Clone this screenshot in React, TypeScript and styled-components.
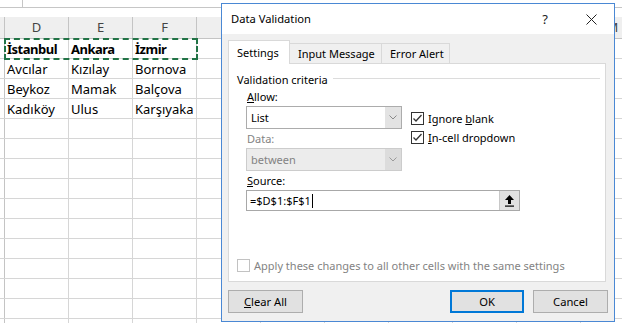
import React from 'react';
import styled, { createGlobalStyle } from 'styled-components';

const GlobalStyle = createGlobalStyle`
  html, body {
    margin: 0;
    padding: 0;
    background: #fff;
  }
  body {
    font-family: "Noto Sans", "Open Sans", sans-serif;
  }
  * {
    box-sizing: border-box;
  }
`;

const Screen = styled.div`
  position: relative;
  width: 622px;
  height: 323px;
  overflow: hidden;
  background: #fff;
`;

/* ---------- spreadsheet behind the dialog ---------- */

const FormulaStrip = styled.div`
  display: flex;
  height: 8px;
  border-bottom: 1px solid #c6c6c6;
`;

const NameBoxEdge = styled.div`
  width: 23px;
  border-right: 1px solid #c6c6c6;
`;

const Band = styled.div`
  height: 9px;
  background: #fff;
`;

const SheetRow = styled.div<{ $header?: boolean }>`
  display: flex;
  height: ${({ $header }) => ($header ? 22 : 20)}px;
  border-bottom: 1px solid ${({ $header }) => ($header ? '#c4c4c4' : '#d6d6d6')};
  background: ${({ $header }) => ($header ? '#efefef' : '#fff')};
`;

const RowStub = styled.div`
  flex: 0 0 5px;
  border-right: 1px solid #c4c4c4;
`;

const Cell = styled.div<{ $header?: boolean; $bold?: boolean }>`
  flex: 0 0 64px;
  border-right: 1px solid ${({ $header }) => ($header ? '#c4c4c4' : '#d6d6d6')};
  padding: ${({ $header }) => ($header ? '0' : '1px 0 0 2px')};
  font-size: 13px;
  line-height: ${({ $header }) => ($header ? '21px' : '19px')};
  text-align: ${({ $header }) => ($header ? 'center' : 'left')};
  color: ${({ $header }) => ($header ? '#444' : '#000')};
  font-weight: ${({ $bold }) => ($bold ? 700 : 400)};
  letter-spacing: ${({ $bold }) => ($bold ? '-0.5px' : '0')};
  white-space: nowrap;
  overflow: hidden;
`;

const CopyMarquee = styled.div`
  position: absolute;
  left: 4px;
  top: 38px;
  width: 194px;
  height: 22px;
  border: 2px dashed #217346;
  pointer-events: none;
`;

/* ---------- dialog ---------- */

const Dialog = styled.div`
  position: absolute;
  left: 221px;
  top: 3px;
  width: 394px;
  height: 319px;
  border: 1px solid #4a88d4;
  background: #f0f0f0;
  display: flex;
  flex-direction: column;
  font-size: 11px;
  color: #000;
`;

const TitleBar = styled.div`
  height: 30px;
  background: #fff;
  display: flex;
  align-items: center;
  padding-left: 9px;
  font-size: 11.2px;
`;

const Title = styled.div`
  flex: 1;
  margin-top: -1px;
`;

const HelpGlyph = styled.div`
  width: 10px;
  font-size: 13px;
  text-align: center;
  margin-right: 36px;
  color: #222;
`;

const CloseGlyph = styled.svg`
  width: 11px;
  height: 11px;
  margin-right: 17px;
`;

const Body = styled.div`
  flex: 1;
  display: flex;
  flex-direction: column;
  padding: 6px 6px 8px 6px;
`;

const TabStrip = styled.div`
  display: flex;
  align-items: flex-end;
  height: 23px;
  position: relative;
  z-index: 1;
`;

const Tab = styled.div<{ $active?: boolean; $w: number }>`
  width: ${({ $w }) => $w}px;
  height: ${({ $active }) => ($active ? 24 : 20)}px;
  margin-bottom: ${({ $active }) => ($active ? -1 : 0)}px;
  padding-left: 8px;
  background: ${({ $active }) => ($active ? '#fff' : '#f0f0f0')};
  border: 1px solid #d9d9d9;
  border-bottom: none;
  border-left: ${({ $active }) => ($active ? '1px solid #d9d9d9' : 'none')};
  line-height: ${({ $active }) => ($active ? 24 : 19)}px;
  white-space: nowrap;
`;

const Panel = styled.div`
  width: 378px;
  height: 219px;
  background: #fff;
  border: 1px solid #d9d9d9;
  display: flex;
  flex-direction: column;
`;

const GroupHeader = styled.div`
  display: flex;
  align-items: center;
  height: 16px;
  margin-top: 7px;
  padding: 0 5px 0 8px;
`;

const GroupRule = styled.div`
  flex: 1;
  height: 1px;
  background: #dcdcdc;
  margin: 0 0 2px 5px;
`;

const GroupBody = styled.div`
  padding-left: 17px;
  margin-top: 2px;
  display: flex;
  flex-direction: column;
`;

const CriteriaRow = styled.div`
  display: flex;
`;

const FieldColumn = styled.div`
  width: 156px;
  display: flex;
  flex-direction: column;
`;

const FieldLabel = styled.div<{ $disabled?: boolean; $gap?: number }>`
  height: 16px;
  line-height: 16px;
  padding-left: 1px;
  margin-top: ${({ $gap }) => $gap ?? 0}px;
  margin-bottom: 1px;
  color: ${({ $disabled }) => ($disabled ? '#838383' : '#000')};
`;

const Combo = styled.div<{ $disabled?: boolean }>`
  height: 23px;
  display: flex;
  border: 1px solid ${({ $disabled }) => ($disabled ? '#cccccc' : '#acacac')};
  background: ${({ $disabled }) => ($disabled ? '#ececec' : '#fff')};
  color: ${({ $disabled }) => ($disabled ? '#838383' : '#000')};
`;

const ComboValue = styled.div`
  flex: 1;
  padding-left: 4px;
  line-height: 21px;
`;

const ComboButton = styled.div<{ $disabled?: boolean }>`
  width: 16px;
  display: flex;
  align-items: center;
  justify-content: center;
  background: ${({ $disabled }) => ($disabled ? '#dcdcdc' : '#e3e3e3')};
`;

const OptionColumn = styled.div`
  display: flex;
  flex-direction: column;
  margin: 20px 0 0 9px;
`;

const OptionRow = styled.label<{ $disabled?: boolean }>`
  display: flex;
  align-items: center;
  height: 19px;
  gap: 4px;
  color: ${({ $disabled }) => ($disabled ? '#838383' : '#000')};
  white-space: nowrap;
`;

const Box = styled.span<{ $disabled?: boolean }>`
  width: 13px;
  height: 13px;
  flex: 0 0 13px;
  border: 1px solid ${({ $disabled }) => ($disabled ? '#c2c2c2' : '#333')};
  background: #fff;
  display: flex;
  align-items: center;
  justify-content: center;
`;

const SourceInput = styled.div`
  width: 274px;
  height: 21px;
  display: flex;
  border: 1px solid #a8a8a8;
  background: #fff;
`;

const SourceText = styled.div`
  flex: 1;
  padding-left: 3px;
  line-height: 19px;
  display: flex;
  align-items: center;
`;

const Caret = styled.span`
  width: 1px;
  height: 14px;
  background: #000;
  margin-left: 1px;
`;

const CollapseButton = styled.div`
  width: 20px;
  display: flex;
  align-items: center;
  justify-content: center;
  background: #e1e1e1;
  border-left: 1px solid #c8c8c8;
`;

const ApplyRow = styled(OptionRow)`
  margin-top: auto;
  margin-bottom: 8px;
  padding-left: 8px;
  height: 15px;
  gap: 4px;
`;

const ButtonBar = styled.div`
  display: flex;
  margin-top: 8px;
`;

const Button = styled.div<{ $default?: boolean; $w?: number }>`
  width: ${({ $w }) => $w ?? 75}px;
  height: 23px;
  display: flex;
  align-items: center;
  justify-content: center;
  background: #e1e1e1;
  border: ${({ $default }) => ($default ? '2px solid #0078d7' : '1px solid #adadad')};
  font-size: 11.2px;
`;

const RightButtons = styled.div`
  display: flex;
  gap: 9px;
  margin-left: auto;
`;

const Chevron: React.FC<{ color: string }> = ({ color }) => (
  <svg width="8" height="5" viewBox="0 0 8 5">
    <polyline points="0.5,0.5 4,4 7.5,0.5" fill="none" stroke={color} strokeWidth="1" />
  </svg>
);

const Check: React.FC = () => (
  <svg width="11" height="11" viewBox="0 0 11 11">
    <polyline points="1.5,5.5 4,8 9.5,2" fill="none" stroke="#333" strokeWidth="1.3" />
  </svg>
);

const CheckBox: React.FC<{ checked?: boolean; disabled?: boolean }> = ({ checked, disabled }) => (
  <Box $disabled={disabled}>{checked && <Check />}</Box>
);

const UpArrow: React.FC = () => (
  <svg width="9" height="12" viewBox="0 0 9 12">
    <polygon points="4.5,0 0,5 9,5" fill="#000" />
    <rect x="3" y="5" width="3" height="4" fill="#000" />
    <rect x="0" y="10.5" width="9" height="1.2" fill="#000" />
  </svg>
);

// columns G..L sit under the dialog, so their letters are left out
const columns = ['D', 'E', 'F', '', '', '', '', '', '', 'M'];
const data: string[][] = [
  ['İstanbul', 'Ankara', 'İzmir'],
  ['Avcılar', 'Kızılay', 'Bornova'],
  ['Beykoz', 'Mamak', 'Balçova'],
  ['Kadıköy', 'Ulus', 'Karşıyaka'],
];
const rowCount = 15;

const App: React.FC = () => {
  return (
    <Screen>
      <GlobalStyle />
      <FormulaStrip>
        <NameBoxEdge />
      </FormulaStrip>
      <Band />
      <SheetRow $header>
        <RowStub />
        {columns.map((c, i) => (
          <Cell key={i} $header>
            {c}
          </Cell>
        ))}
      </SheetRow>
      {Array.from({ length: rowCount }).map((_, r) => (
        <SheetRow key={r}>
          <RowStub />
          {columns.map((_c, ci) => (
            <Cell key={ci} $bold={r === 0}>
              {data[r]?.[ci] ?? ''}
            </Cell>
          ))}
        </SheetRow>
      ))}
      <CopyMarquee />

      <Dialog>
        <TitleBar>
          <Title>Data Validation</Title>
          <HelpGlyph>?</HelpGlyph>
          <CloseGlyph viewBox="0 0 11 11">
            <line x1="0.5" y1="0.5" x2="10.5" y2="10.5" stroke="#222" strokeWidth="1" />
            <line x1="10.5" y1="0.5" x2="0.5" y2="10.5" stroke="#222" strokeWidth="1" />
          </CloseGlyph>
        </TitleBar>
        <Body>
          <TabStrip>
            <Tab $active $w={62}>Settings</Tab>
            <Tab $w={92}>Input Message</Tab>
            <Tab $w={68}>Error Alert</Tab>
          </TabStrip>
          <Panel>
            <GroupHeader>
              Validation criteria
              <GroupRule />
            </GroupHeader>
            <GroupBody>
              <CriteriaRow>
                <FieldColumn>
                  <FieldLabel>
                    <u>A</u>llow:
                  </FieldLabel>
                  <Combo>
                    <ComboValue>List</ComboValue>
                    <ComboButton>
                      <Chevron color="#8a8a8a" />
                    </ComboButton>
                  </Combo>
                  <FieldLabel $disabled $gap={2}>
                    Data:
                  </FieldLabel>
                  <Combo $disabled>
                    <ComboValue>between</ComboValue>
                    <ComboButton $disabled>
                      <Chevron color="#9a9a9a" />
                    </ComboButton>
                  </Combo>
                </FieldColumn>
                <OptionColumn>
                  <OptionRow>
                    <CheckBox checked />
                    <span>
                      Ignore <u>b</u>lank
                    </span>
                  </OptionRow>
                  <OptionRow>
                    <CheckBox checked />
                    <span>
                      <u>I</u>n-cell dropdown
                    </span>
                  </OptionRow>
                </OptionColumn>
              </CriteriaRow>
              <FieldLabel $gap={2}>
                <u>S</u>ource:
              </FieldLabel>
              <SourceInput>
                <SourceText>
                  =$D$1:$F$1
                  <Caret />
                </SourceText>
                <CollapseButton>
                  <UpArrow />
                </CollapseButton>
              </SourceInput>
            </GroupBody>
            <ApplyRow $disabled>
              <CheckBox disabled />
              <span>Apply these changes to all other cells with the same settings</span>
            </ApplyRow>
          </Panel>
          <ButtonBar>
            <Button>
              <span>
                <u>C</u>lear All
              </span>
            </Button>
            <RightButtons>
              <Button $default $w={74}>
                OK
              </Button>
              <Button>Cancel</Button>
            </RightButtons>
          </ButtonBar>
        </Body>
      </Dialog>
    </Screen>
  );
};

export default App;
